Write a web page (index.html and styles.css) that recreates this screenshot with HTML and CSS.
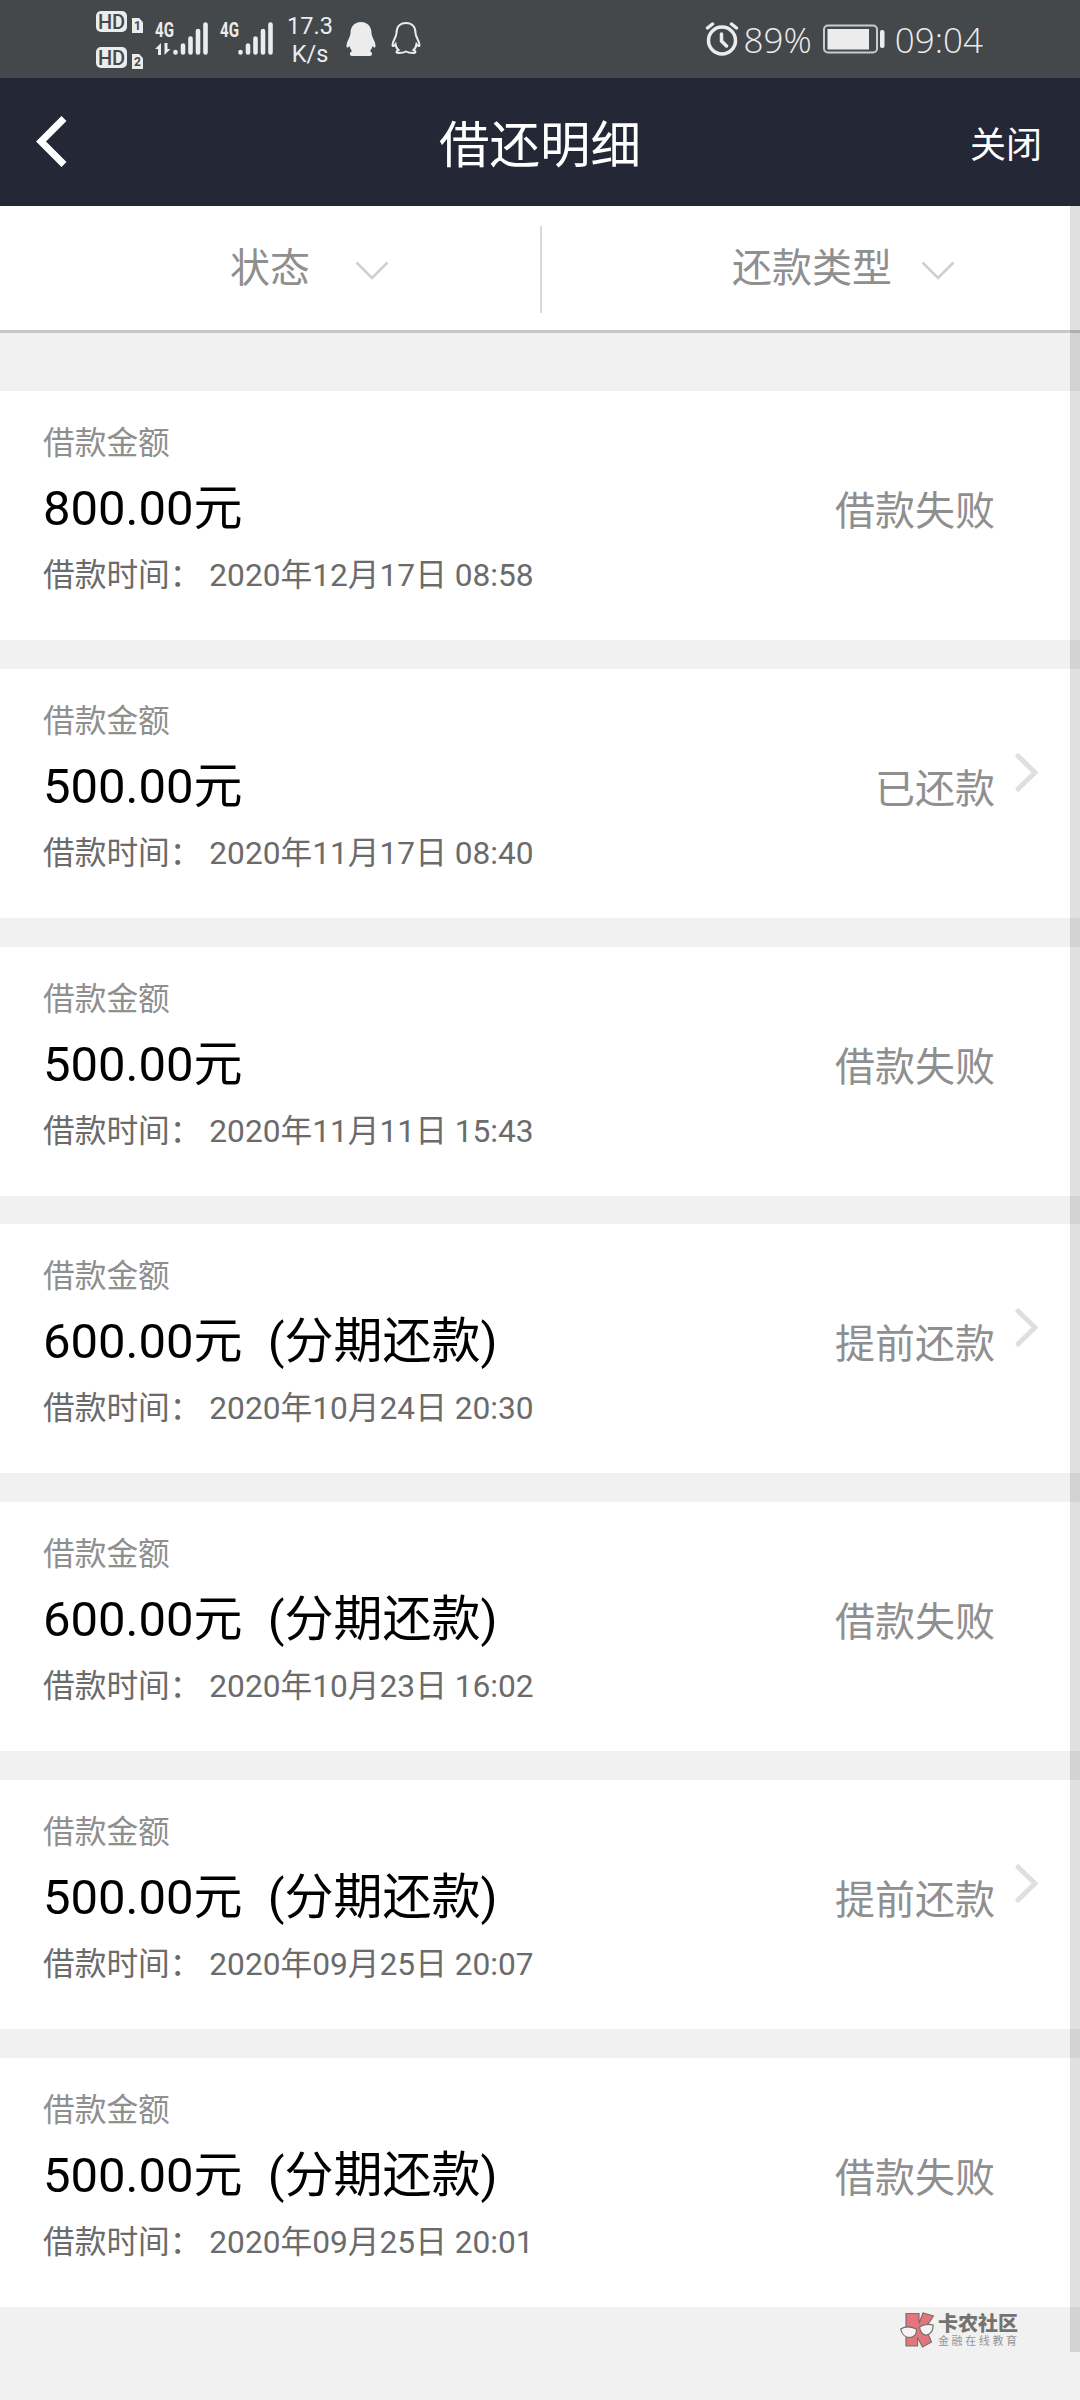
FILE: index.html
```html
<!DOCTYPE html>
<html lang="zh-CN">
<head>
<meta charset="utf-8">
<title>借还明细</title>
<link rel="stylesheet" href="styles.css">
</head>
<body>
<div class="statusbar">
  <div class="sims">
    <div class="sim"><span class="hd">HD</span><span class="slot">1</span></div>
    <div class="sim"><span class="hd">HD</span><span class="slot">2</span></div>
  </div>
  <div class="signal">
    <svg width="54" height="36" viewBox="0 0 54 36"><g stroke="#ececec" stroke-width="4.600" stroke-linecap="round"><path d="M20.500 31v.5M28 24.500v7M35.500 17.500v14M43 10v21.500M50.500 3.500v28"/></g><path d="M0 28l6-6v12H3v-6zM15.500 28l-6 6V22h3v6z" fill="#ececec"/></svg>
    <span class="gen">4G</span>
  </div>
  <div class="signal second">
    <svg width="54" height="36" viewBox="0 0 54 36"><g stroke="#ececec" stroke-width="4.600" stroke-linecap="round"><path d="M20.500 31v.5M28 24.500v7M35.500 17.500v14M43 10v21.500M50.500 3.500v28"/></g></svg>
    <span class="gen">4G</span>
  </div>
  <div class="speed"><span>17.3</span><span>K/s</span></div>
  <svg class="qq" width="30" height="36" viewBox="0 0 30 36"><path fill="#ececec" d="M15 1C8 1 4.500 6 4.500 12c0 4-4 8-4 13 0 2 1.500 2 3 0 .5 2 1.500 4 2.500 5-3 1.500-2.500 5 0 5h18c2.500 0 3-3.500 0-5 1-1 2-3 2.500-5 1.500 2 3 2 3 0 0-5-4-9-4-13C25.500 6 22 1 15 1z"/></svg>
  <svg class="qq line" width="30" height="36" viewBox="0 0 30 36"><path fill="none" stroke="#ececec" stroke-width="2" d="M15 2C9 2 5.500 6 5.500 12c0 4-4 8-4 12 0 2 1.500 1 3-1 .5 3 1.500 5 3 6-3 1.500-2.500 3 0 3 3 0 5 0 7.500-1.500 2.500 1.500 4.500 1.500 7.500 1.500 2.500 0 3-1.500 0-3 1.500-1 2.500-3 3-6 1.500 2 3 3 3 1 0-4-4-8-4-12C24.500 6 21 2 15 2z"/></svg>
  <div class="right">
    <svg width="34" height="34" viewBox="0 0 34 34" fill="none" stroke="#ececec" stroke-linecap="round"><circle cx="17" cy="18.500" r="13.500" stroke-width="3.500"/><path stroke-width="3.500" d="M16.500 12v7l5 5M2.500 6l5-4M31.500 6l-5-4"/></svg>
    <span class="pct">89%</span>
    <svg class="battery" width="62" height="30" viewBox="0 0 62 30"><rect x="1" y="1.500" width="53" height="27" rx="4" fill="none" stroke="#c9cbcc" stroke-width="2"/><rect x="4.500" y="5" width="41.500" height="20.500" fill="#ececec"/><rect x="57" y="6" width="4.500" height="18" rx="2" fill="#ececec"/></svg>
    <span class="clock">09:04</span>
  </div>
</div>
<header class="header">
  <svg class="back" width="32" height="54" viewBox="0 0 32 54"><path d="M28 3.500L5 26.500l23 23" fill="none" stroke="#fff" stroke-width="7"/></svg>
  <h1 class="title">借还明细</h1>
  <span class="close">关闭</span>
</header>
<main class="page">
  <nav class="filters">
    <div class="filter status-filter"><span>状态</span><svg width="34" height="20" viewBox="0 0 34 20"><path d="M1.500 1.500L17 17 32.500 1.500" fill="none" stroke="#cfcfcf" stroke-width="2.500"/></svg></div>
    <i class="divider"></i>
    <div class="filter type-filter"><span>还款类型</span><svg width="34" height="20" viewBox="0 0 34 20"><path d="M1.500 1.500L17 17 32.500 1.500" fill="none" stroke="#cfcfcf" stroke-width="2.500"/></svg></div>
  </nav>
  <section class="list">
    <article class="card"><div class="info"><p class="label">借款金额</p><p class="amount">800.00元</p><p class="time">借款时间： 2020年12月17日 08:58</p></div><span class="state">借款失败</span></article>
    <article class="card"><div class="info"><p class="label">借款金额</p><p class="amount">500.00元</p><p class="time">借款时间： 2020年11月17日 08:40</p></div><span class="state">已还款</span><svg class="arrow" width="24" height="40" viewBox="0 0 24 40"><path d="M4 3l17 16.500L4 36"/></svg></article>
    <article class="card"><div class="info"><p class="label">借款金额</p><p class="amount">500.00元</p><p class="time">借款时间： 2020年11月11日 15:43</p></div><span class="state">借款失败</span></article>
    <article class="card"><div class="info"><p class="label">借款金额</p><p class="amount">600.00元<span class="plan">(分期还款)</span></p><p class="time">借款时间： 2020年10月24日 20:30</p></div><span class="state">提前还款</span><svg class="arrow" width="24" height="40" viewBox="0 0 24 40"><path d="M4 3l17 16.500L4 36"/></svg></article>
    <article class="card"><div class="info"><p class="label">借款金额</p><p class="amount">600.00元<span class="plan">(分期还款)</span></p><p class="time">借款时间： 2020年10月23日 16:02</p></div><span class="state">借款失败</span></article>
    <article class="card"><div class="info"><p class="label">借款金额</p><p class="amount">500.00元<span class="plan">(分期还款)</span></p><p class="time">借款时间： 2020年09月25日 20:07</p></div><span class="state">提前还款</span><svg class="arrow" width="24" height="40" viewBox="0 0 24 40"><path d="M4 3l17 16.500L4 36"/></svg></article>
    <article class="card"><div class="info"><p class="label">借款金额</p><p class="amount">500.00元<span class="plan">(分期还款)</span></p><p class="time">借款时间： 2020年09月25日 20:01</p></div><span class="state">借款失败</span></article>
  </section>
  <div class="scrollbar"></div>
</main>
<div class="watermark">
  <svg width="34" height="36" viewBox="0 0 34 36"><path d="M6 1.500h13v10L23 1l10.500 3-8 12 6 14-9 5-5-9.500V34H6z" fill="#e5757c" stroke="#7d6f70" stroke-width="1.200"/><path d="M.7 17c4-2.500 10-2.500 15.500 0 1 5-2 8.500-6.500 8.500S1.700 22 .7 17zM19.500 15c4-2.500 9-3 13.500-2 .5 4-1.500 9-6 10-4 .5-7-3-7.500-8z" fill="#f5f3f3" stroke="#716b6c" stroke-width="1.200"/></svg>
  <div class="brand"><strong>卡农社区</strong><span>金融在线教育</span></div>
</div>
</body>
</html>
```
FILE: styles.css
```css
* { box-sizing: border-box; }
body {
  margin: 0;
  width: 1080px;
  height: 2400px;
  overflow: hidden;
  position: relative;
  background: #f1f1f1;
  font-family: Roboto, "Noto Sans CJK SC", sans-serif;
}
p, h1 { margin: 0; font-weight: 400; }
svg { display: block; flex: none; }

.statusbar {
  display: flex;
  height: 78px;
  padding-left: 96px;
  background: #44484b;
  color: #ececec;
}
.sims { display: flex; flex-direction: column; gap: 15px; padding-top: 11px; width: 48px; }
.sim { display: flex; gap: 5px; height: 21px; }
.hd {
  width: 31px; height: 21px; border-radius: 5px;
  background: #ececec; color: #44484b;
  font: 500 20px/22px Roboto, sans-serif;
  text-align: center;
}
.slot {
  width: 11px; height: 15px; margin-top: 7px;
  background: #ececec; color: #44484b;
  clip-path: polygon(0 0, 65% 0, 100% 28%, 100% 100%, 0 100%);
  font: 700 12px/16px Roboto, sans-serif;
  text-align: center;
}
.signal { position: relative; width: 54px; margin-left: 11px; padding-top: 21px; }
.gen {
  position: absolute; left: 0; top: 20px;
  font: 700 21px/20px Roboto, sans-serif;
  transform: scaleX(.72); transform-origin: left;
}
.speed {
  display: flex; flex-direction: column; align-items: center;
  width: 48px; margin-left: 12px; padding-top: 12px;
  font-size: 23.500px; line-height: 28px;
}
.qq { margin: 21px 0 0 12px; }
.qq.line { margin-left: 15px; }
.right {
  display: flex; align-items: flex-start;
  margin-left: auto; padding: 22px 97px 0 0;
  font: 300 35px/36px "Open Sans", sans-serif;
}
.pct { margin-left: 5px; }
.battery { margin: 2px 10px 0 11px; }

.header {
  display: grid;
  grid-template-columns: 200px 1fr 200px;
  align-items: center;
  height: 128px;
  background: #242735;
  color: #fff;
}
.back { margin-left: 36px; }
.title { font-size: 50.500px; text-align: center; line-height: 60px; padding-top: 8px; }
.close { font-size: 36px; text-align: right; padding: 0 38px 1px 0; }

.page { position: relative; }
.filters {
  display: grid; grid-template-columns: 540px 2px 1fr;
  align-items: center;
  height: 127px;
  border-bottom: 3px solid #c8c7cc;
  background: #fff;
  color: #8f8f8f;
  font-size: 40px;
}
.filter { display: flex; align-items: center; height: 100%; }
.filter span { line-height: 60px; padding-top: 1px; }
.filter svg { margin-top: 6px; }
.status-filter { padding-left: 230px; gap: 45px; }
.type-filter { padding-left: 190px; gap: 29px; }
.divider { height: 87px; margin-top: 2px; background: #d9d9d9; }

.list {
  display: flex; flex-direction: column;
  gap: 28.800px;
  padding-top: 58px;
}
.card {
  display: flex;
  height: 249px;
  padding: 0 42px 0 43px;
  background: #fff;
}
.info { flex: 1; padding-top: 31px; }
.label { font-size: 31.700px; line-height: 44px; color: #8f8f8f; }
.amount { font-size: 49px; line-height: 72px; color: #000; padding-top: 7px; }
.plan { margin-left: 25px; }
.time { font-size: 31.700px; line-height: 48px; color: #6b6b6b; padding-top: 7px; white-space: pre; }
.state { margin: 91px 43px 0 0; font-size: 40px; line-height: 60px; color: #8f8f8f; }
.arrow { margin: 84px 0 0 -24px; fill: none; stroke: #dfdfdf; stroke-width: 5; stroke-linecap: round; }
.scrollbar {
  position: absolute; right: 0; top: 0;
  width: 10px; height: 2146px;
  background: rgba(0, 0, 0, .12);
}

.watermark {
  position: absolute; left: 900px; top: 2312px;
  display: flex; gap: 4px;
}
.brand { display: flex; flex-direction: column; padding-top: 1px; color: #737373; }
.brand strong { font-size: 20px; line-height: 22px; font-weight: 900; }
.brand span { font-size: 11px; line-height: 13px; letter-spacing: 2.600px; color: #949494; }
```
